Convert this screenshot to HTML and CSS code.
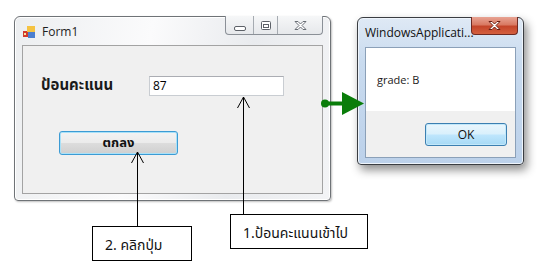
FILE: index.html
```html
<!DOCTYPE html>
<html lang="th">
<head>
    <meta charset="UTF-8">
    <title>Form1 grade</title>
    <link rel="stylesheet" href="styles.css">
</head>
<body>
    <div class="stage">
        <!-- Form1 window -->
        <div class="win form1">
            <div class="titlebar">
                <svg class="app-icon" width="12" height="12" viewBox="0 0 12 12">
                    <rect x="0" y="5" width="5" height="6" fill="#d23b2c"/>
                    <rect x="4" y="0" width="8" height="6" fill="#f5c342"/>
                    <rect x="5" y="6" width="7" height="6" fill="#4b7fd0"/>
                    <rect x="1" y="7" width="2" height="2" fill="#f6e3a1"/>
                </svg>
                <span class="title">Form1</span>
                <div class="caption-btns">
                    <div class="cbtn cmin">
                        <svg width="12" height="6" viewBox="0 0 12 6"><rect x="0.5" y="0.5" width="11" height="4" rx="1.5" fill="#fff" stroke="#5d6168"/></svg>
                    </div>
                    <div class="cbtn cmax">
                        <svg width="10" height="9" viewBox="0 0 10 9"><rect x="0.5" y="0.5" width="9" height="8" rx="1" fill="#fff" stroke="#5d6168"/><rect x="2.5" y="3.5" width="5" height="3" fill="none" stroke="#5d6168"/></svg>
                    </div>
                    <div class="cbtn cclose">
                        <svg width="13" height="11" viewBox="0 0 13 11"><path d="M1 1.5h3l2.5 2.5 2.5-2.5h3l-4 4 4 4h-3l-2.5-2.5-2.5 2.5h-3l4-4z" fill="#fff" stroke="#6a6f76" stroke-linejoin="round"/></svg>
                    </div>
                </div>
            </div>
            <div class="client">
                <div class="row">
                    <span class="lbl">ป้อนคะแนน</span>
                    <div class="textbox">87</div>
                </div>
                <div class="btn btn-ok-th">ตกลง</div>
            </div>
        </div>

        <!-- MessageBox window -->
        <div class="win msgbox">
            <div class="titlebar">
                <span class="title">WindowsApplicati...</span>
                <div class="close-red">
                    <svg width="13" height="11" viewBox="0 0 13 11"><path d="M1 1.5h3l2.5 2.5 2.5-2.5h3l-4 4 4 4h-3l-2.5-2.5-2.5 2.5h-3l4-4z" fill="#fff" stroke="#6b1d12" stroke-linejoin="round"/></svg>
                </div>
            </div>
            <div class="client mb-client">
                <div class="mb-text">grade: B</div>
                <div class="mb-foot">
                    <div class="btn btn-ok">OK</div>
                </div>
            </div>
        </div>

        <!-- callouts -->
        <div class="callout c2">2. คลิกปุ่ม</div>
        <div class="callout c1">1.ป้อนคะแนนเข้าไป</div>

        <svg class="arrows" width="541" height="268" viewBox="0 0 541 268">
            <g stroke="#000" stroke-width="1" fill="none">
                <path d="M137.5 152v74"/>
                <path d="M131.5 163l6-11 6 11"/>
                <path d="M243.5 97v117"/>
                <path d="M237.5 108l6-11 6 11"/>
            </g>
            <circle cx="325" cy="103.5" r="4" fill="#0a7d0a"/>
            <path d="M325 103.5h19" stroke="#0a7d0a" stroke-width="4"/>
            <path d="M342 92l22 11.5-22 11.5z" fill="#0a7d0a"/>
        </svg>
    </div>
</body>
</html>
```
FILE: styles.css
```css
body {
    margin: 0;
    padding: 0;
    background: #fff;
    font-family: "Tahoma", "Noto Sans Thai", "Loma", "Garuda", "DejaVu Sans", sans-serif;
}
.stage {
    position: relative;
    width: 541px;
    height: 268px;
    overflow: hidden;
}
.win {
    position: absolute;
    box-sizing: border-box;
    display: flex;
    flex-direction: column;
    border: 1px solid #6f7377;
    border-radius: 6px 6px 4px 4px;
}
.titlebar {
    position: relative;
    display: flex;
    align-items: center;
    flex: none;
}
.title {
    font-family: "Open Sans", "DejaVu Sans", sans-serif;
    font-size: 12px;
    color: #1e1e1e;
}

/* Form1 */
.form1 {
    left: 14px;
    top: 16px;
    width: 317px;
    height: 185px;
    background: linear-gradient(100deg, #eceef0 0%, #fbfbfc 40%, #e9ebee 70%, #f3f4f6 100%);
    box-shadow: inset 0 0 0 1px #fff, 1px 1px 2px rgba(0,0,0,.25);
}
.form1 .titlebar {
    height: 28px;
    padding-left: 8px;
}
.app-icon {
    margin-right: 7px;
    margin-top: 1px;
}
.caption-btns {
    position: absolute;
    top: -1px;
    right: 7px;
    display: flex;
    height: 18px;
    border: 1px solid #8b9097;
    border-top: none;
    border-radius: 0 0 4px 4px;
    background: linear-gradient(#f6f7f8, #e6e8eb);
    overflow: hidden;
}
.cbtn {
    display: flex;
    align-items: center;
    justify-content: center;
    height: 100%;
}
.cmin { width: 28px; border-right: 1px solid #a6abb1; align-items: flex-end; padding-bottom: 2px; box-sizing: border-box; }
.cmax { width: 23px; border-right: 1px solid #a6abb1; }
.cclose { width: 44px; }
.form1 .client {
    flex: 1;
    margin: 0 7px 6px 7px;
    border: 1px solid #a3a3a3;
    background: #f0f0f0;
    padding: 28px 0 0 18px;
}
.row {
    display: flex;
    align-items: center;
}
.lbl {
    width: 108px;
    font-size: 15px;
    font-weight: bold;
    color: #1a1a1a;
}
.textbox {
    box-sizing: border-box;
    width: 135px;
    height: 20px;
    border: 1px solid #c9cdd2;
    border-top-color: #abadb3;
    background: #fff;
    font-family: "Open Sans", "DejaVu Sans", sans-serif;
    font-size: 12px;
    line-height: 18px;
    padding-left: 3px;
}
.btn {
    box-sizing: border-box;
    display: flex;
    align-items: center;
    justify-content: center;
    border-radius: 3px;
    color: #111;
}
.btn-ok-th {
    width: 119px;
    height: 24px;
    margin: 34px 0 0 18px;
    border: 1px solid #3c9bd4;
    box-shadow: inset 0 0 0 1px #a9e1f8;
    background: linear-gradient(#f3f3f3 0%, #ebebeb 48%, #dcdcdc 52%, #cfcfcf 100%);
    font-size: 13px;
    font-weight: bold;
}

/* MessageBox */
.msgbox {
    left: 357px;
    top: 17px;
    width: 167px;
    height: 148px;
    border-color: #3a3d42;
    background: linear-gradient(#dfe9f5 0%, #c9dbef 30%, #bcd1ea 100%);
    box-shadow: inset 0 0 0 1px #eef4fb, 3px 5px 10px rgba(0,0,0,.45);
}
.msgbox .titlebar {
    height: 29px;
    padding-left: 7px;
}
.msgbox .title {
    color: #111;
    margin-top: -1px;
}
.close-red {
    position: absolute;
    top: -1px;
    right: 5px;
    width: 45px;
    height: 17px;
    display: flex;
    align-items: center;
    justify-content: center;
    border: 1px solid #6e2a22;
    border-top: none;
    border-radius: 0 0 4px 4px;
    background: linear-gradient(#e8a393 0%, #d97a63 45%, #c4452a 55%, #d4603f 100%);
}
.mb-client {
    flex: 1;
    margin: 0 7px 6px 7px;
    border: 1px solid #8ba0b8;
    display: flex;
    flex-direction: column;
    background: #fff;
}
.mb-text {
    height: 63px;
    padding: 24px 0 0 11px;
    box-sizing: border-box;
    font-family: "Open Sans", "DejaVu Sans", sans-serif;
    font-size: 11px;
    color: #1a1a1a;
    background: #fff;
}
.mb-foot {
    flex: 1;
    background: #f0f0f0;
    display: flex;
    justify-content: flex-end;
    align-items: flex-start;
    padding: 12px 8px 0 0;
}
.btn-ok {
    width: 82px;
    height: 23px;
    border: 1px solid #3c7fb1;
    box-shadow: inset 0 0 0 1px #c2e8fa;
    background: linear-gradient(#eaf6fd 0%, #d9f0fc 48%, #bee6fd 52%, #a7d9f5 100%);
    font-family: "Open Sans", "DejaVu Sans", sans-serif;
    font-size: 12px;
}

/* callouts */
.callout {
    position: absolute;
    box-sizing: border-box;
    height: 35px;
    border: 1px solid #000;
    background: #fff;
    display: flex;
    align-items: center;
    padding: 4px 0 0 12px;
    font-size: 14px;
    color: #111;
}
.c2 { left: 92px; top: 226px; width: 100px; }
.c1 { left: 230px; top: 214px; width: 138px; }
.arrows {
    position: absolute;
    left: 0;
    top: 0;
    pointer-events: none;
}
```
